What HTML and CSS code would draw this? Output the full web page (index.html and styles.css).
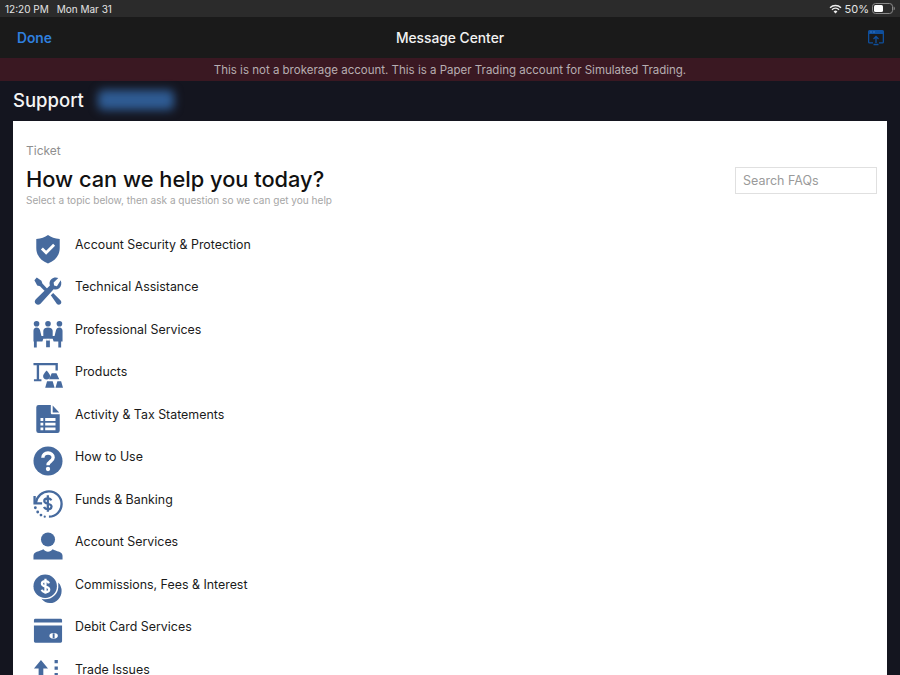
FILE: index.html
```html
<!DOCTYPE html>
<html lang="en">
<head>
<meta charset="utf-8">
<title>Message Center</title>
<link rel="stylesheet" href="styles.css">
</head>
<body>
<div class="app">
  <div class="status">
    <div class="status-left"><span>12:20 PM</span><span>Mon Mar 31</span></div>
    <div class="status-right">
      <svg class="wifi" width="13" height="10" viewBox="0 0 14 11"><path fill="none" stroke="#eee" stroke-width="1.600" d="M1 4.200a8.600 8.600 0 0 1 12 0M3.100 6.300a5.600 5.600 0 0 1 7.800 0"/><path fill="#eee" d="M7 10.400 4.900 8.200a3 3 0 0 1 4.200 0z"/></svg>
      <span>50%</span>
      <svg class="battery" width="23" height="11" viewBox="0 0 23 11"><rect x=".5" y=".5" width="20" height="10" rx="3" fill="none" stroke="#8a8a8a"/><rect x="2" y="2" width="9" height="7" rx="1.500" fill="#fff"/><path d="M21.600 3.600c.8.300 1.200 1 1.200 1.900s-.4 1.600-1.200 1.900z" fill="#8a8a8a"/></svg>
    </div>
  </div>
  <header class="nav">
    <span class="done">Done</span>
    <span class="nav-title">Message Center</span>
    <svg class="nav-icon" width="16" height="16" viewBox="0 0 16 16"><path fill="#0f4f9c" d="M1.500 0h13A1.500 1.500 0 0 1 16 1.500V12a1.500 1.500 0 0 1-1.500 1.500H11v-1.300h3.700V4H1.300v8.200H5v1.300H1.500A1.500 1.500 0 0 1 0 12V1.500A1.500 1.500 0 0 1 1.500 0z"/><path fill="none" stroke="#0f4f9c" stroke-width="1.300" d="M8 13V6.500M5.500 9 8 6.500 10.500 9M5.500 14.500h5"/><path stroke="#3f7fc8" stroke-width=".8" d="M2 2h2M5 2h2"/></svg>
  </header>
  <div class="banner">This is not a brokerage account. This is a Paper Trading account for Simulated Trading.</div>
  <div class="support"><h1>Support</h1><span class="blur-name"></span></div>
  <main class="card">
    <div class="card-head">
      <div>
        <div class="crumb">Ticket</div>
        <h2>How can we help you today?</h2>
        <p class="sub">Select a topic below, then ask a question so we can get you help</p>
      </div>
      <div class="search">Search FAQs</div>
    </div>
    <ul class="topics">
      <li><svg class="ico" viewBox="0 0 32 32"><path fill="#466a9e" d="M16 1C19.500 3.500 23 4.800 28.500 5.300V15c0 8-5 13.500-12.500 16.500C8.500 28.500 3.500 23 3.500 15V5.300C9 4.800 12.500 3.500 16 1z"/><path fill="none" stroke="#fff" stroke-width="3" d="M9.500 15.500 14 20l8.500-8.500"/></svg>Account Security &amp; Protection</li>
      <li><svg class="ico" viewBox="0 0 32 32"><path fill="#466a9e" d="M1.500 4.500 4 1.500l5 3.500 1 3 6 6.500-2.500 2.500-6-6-3-1zM29.500 4.500c1.500 3.500.5 6.500-1.500 8.500-2 1.500-4 1.700-6 1L8 29.500c-1.500 1.500-3.500 1.500-5 .2-1.500-1.500-1.500-3.500 0-5L18 10c-.8-2.500-.3-4.700 1.500-6.500C21.500 1.500 24.500 1 27 2.200l-5 4.800.5 3 3 .8z"/><path fill="#466a9e" d="m19 20.500 2.500-2.500 8 8c1 1.200 1 2.800-.1 3.800-1.100 1.100-2.700 1.100-3.900 0z"/></svg>Technical Assistance</li>
      <li><svg class="ico" viewBox="0 0 32 32"><g fill="#466a9e"><circle cx="3.800" cy="5" r="3"/><circle cx="16" cy="5" r="3"/><circle cx="28.200" cy="5" r="3"/><path d="M.5 12.500c0-2 1.300-3.500 3.300-3.500s3.200 1.200 3.700 3L9 18h2v-5.500C11 10.300 13.500 9 16 9s5 1.300 5 3.500V18h2l1.500-6c.5-1.800 1.700-3 3.700-3s3.300 1.500 3.300 3.500V24h-1.500v6.500h-3V24H22l-1-3h-3v9h-4v-9h-3l-1 3H4v6.500H1V24H.5z"/></g><path fill="#fff" d="M14 21h4v2h-4z"/></svg>Professional Services</li>
      <li><svg class="ico" viewBox="0 0 32 32"><g fill="#466a9e"><path d="M.5 2H26.500V10H24V4.500H6.500V19.500H9V21.500H1V19.500H4V4.500H.5z"/><path d="M14.500 10s-3.700 3.700-3.700 6a3.700 3.700 0 0 0 7.400 0c0-2.300-3.700-6-3.700-6z"/><path d="M20 13h5l3 6.500H17zM15 21.500h6l2 7H13zM26 21.500h4l2 7h-8z"/></g></svg>Products</li>
      <li><svg class="ico" viewBox="0 0 32 32"><path fill="#466a9e" d="M6 1h13v8.500c0 .8.700 1.500 1.500 1.500H28.500v17.500a2.500 2.500 0 0 1-2.500 2.500H6A2.500 2.500 0 0 1 3.500 28.500V3.500A2.500 2.500 0 0 1 6 1zM21 1.500l7 7.500h-7z"/><path fill="#fff" d="M8 15h3v3H8zM13 15h11v3H13zM8 20h3v3H8zM13 20h11v3H13zM8 25h3v3H8zM13 25h11v3H13z"/></svg>Activity &amp; Tax Statements</li>
      <li><svg class="ico" viewBox="0 0 32 32"><circle cx="16" cy="16" r="15.500" fill="#466a9e"/><path fill="none" stroke="#fff" stroke-width="3.600" d="M10.500 12.500c0-3.300 2.400-5 5.500-5s5.500 1.800 5.500 4.700c0 4.300-5.500 4-5.500 8.300"/><circle cx="16" cy="24.500" r="2.300" fill="#fff"/></svg>How to Use</li>
      <li><svg class="ico" viewBox="0 0 32 32"><g fill="none" stroke="#466a9e" stroke-width="2.500"><path d="M3 15C4 7.500 10 2.500 17 2.500c7.500 0 13.500 6 13.500 13.500S24.500 29.500 17 29.500"/><path d="M1.700 7.500v7.800h8"/></g><g fill="#466a9e"><circle cx="2.500" cy="20" r="1.500"/><circle cx="5" cy="24.500" r="1.500"/><circle cx="8.500" cy="27.800" r="1.500"/><circle cx="12.500" cy="29.500" r="1.200"/></g><path fill="none" stroke="#466a9e" stroke-width="2.400" transform="translate(-1.500 -.3)" d="M21 12.500c-.5-1.500-2-2.300-3.800-2.300-2 0-3.700 1-3.700 2.800 0 4 7.800 2 7.800 6 0 1.800-1.800 2.800-3.900 2.800s-3.600-.9-4.100-2.500M17.300 7v17.500"/></svg>Funds &amp; Banking</li>
      <li><svg class="ico" viewBox="0 0 32 32"><circle cx="16" cy="9" r="7.500" fill="#466a9e"/><path fill="#466a9e" d="M.5 30.500v-4c0-2 1.500-3.500 3.500-4.300C7 21.300 9 20.500 11 19.500c1.500 1.500 3 2.500 5 2.500s3.500-1 5-2.500c2 1 4 1.800 7 2.700 2 .8 3.500 2.300 3.500 4.300v4z"/></svg>Account Services</li>
      <li><svg class="ico" viewBox="0 0 32 32"><circle cx="13" cy="13" r="12.500" fill="#466a9e"/><path fill="#466a9e" d="M27 9a13.500 13.500 0 0 1 3.500 9c0 7-5.500 13-12.500 13-3.500 0-6.800-1.500-9-4.500 1.300.4 2.700.5 4 .5A14 14 0 0 0 27 14c0-1.700-.1-3.300 0-5z"/><path fill="none" stroke="#fff" stroke-width="2.400" d="M17 10c-.5-1.500-2-2.300-3.800-2.300-2 0-3.700 1-3.700 2.800 0 4 7.800 2 7.800 6 0 1.800-1.800 2.800-3.900 2.800s-3.600-.9-4.100-2.500M13.300 5v16"/></svg>Commissions, Fees &amp; Interest</li>
      <li><svg class="ico" viewBox="0 0 32 32"><path fill="#466a9e" d="M2.500 3h27A1.500 1.500 0 0 1 31 4.500V7H1V4.500A1.500 1.500 0 0 1 2.500 3zM1 10h30v17a1.500 1.500 0 0 1-1.500 1.500h-27A1.500 1.500 0 0 1 1 27z"/><ellipse cx="22" cy="21" rx="4.500" ry="3" fill="#fff"/><rect x="21" y="18.500" width="2" height="5" fill="#466a9e"/></svg>Debit Card Services</li>
      <li><svg class="ico" viewBox="0 0 32 32"><path fill="#466a9e" d="M8.500 1l7.500 9h-5v22H6V10H1zM23 1h3.500v3.500H23zM23 8h3.500v3.500H23zM23 15h3.500v3.500H23z"/></svg>Trade Issues</li>
    </ul>
  </main>
</div>
</body>
</html>
```

FILE: styles.css
```css
* { box-sizing: border-box; }
html, body { margin: 0; height: 100%; overflow: hidden; background: #14151f; }
body { font-family: "Inter", "Liberation Sans", sans-serif; }
.app { width: 900px; height: 675px; display: flex; flex-direction: column; overflow: hidden; }
.status { height: 17px; flex: none; background: #2b2b2b; color: #e4e4e4; font-size: 10px; display: flex; justify-content: space-between; align-items: center; padding: 0 5px 0 5px; }
.status-left { display: flex; gap: 8px; }
.status-right { display: flex; align-items: center; gap: 3px; font-size: 11px; }
.nav { height: 41px; flex: none; background: #1a1a1a; display: flex; align-items: center; justify-content: space-between; padding: 0 16px 0 17px; position: relative; }
.done { color: #2f7fde; font-size: 13.800px; font-weight: 600; }
.nav-title { position: absolute; left: 0; right: 0; text-align: center; color: #f2f2f2; font-size: 13.800px; font-weight: 500; }
.nav-icon { position: relative; }
.banner { height: 23px; flex: none; background: #3a1822; color: #b7aeb1; font-size: 11.500px; display: flex; align-items: center; justify-content: center; }
.support { height: 40px; flex: none; display: flex; align-items: center; padding: 0 13px 2px; background: #14151f; }
.support h1 { margin: 0; color: #f4f4f4; font-size: 18.500px; font-weight: 500; }
.blur-name { width: 76px; height: 20px; margin-left: 14px; background: #2f5c94; filter: blur(5px); border-radius: 5px; }
.card { flex: 1; margin: 0 13px; background: #fff; padding: 22px 10px 0 13px; }
.card-head { display: flex; justify-content: space-between; align-items: flex-start; }
.crumb { color: #8f8f8f; font-size: 12px; line-height: 15px; }
h2 { margin: 6px 0 0; color: #111; font-size: 21.800px; line-height: 30px; font-weight: 500; }
.sub { margin: -1px 0 0; color: #a6a6a6; font-size: 10.050px; line-height: 14px; }
.search { width: 142px; height: 27px; margin-top: 24px; border: 1.500px solid #e0e0e0; color: #9a9a9a; font-size: 12.500px; padding-left: 7px; display: flex; align-items: center; }
.topics { list-style: none; margin: 16px 0 0; padding: 0 0 0 4px; }
.topics li { height: 42.500px; display: flex; align-items: center; gap: 12.500px; color: #1a1a1a; font-size: 12.400px; }
.ico { width: 30px; height: 30px; flex: none; margin: 9px 0 0 2.500px; }
```
